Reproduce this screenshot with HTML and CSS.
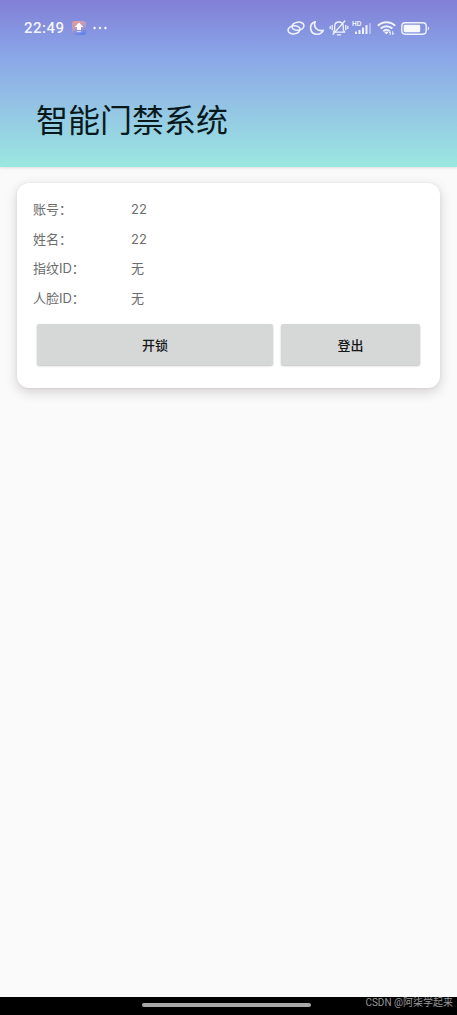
FILE: index.html
```html
<!DOCTYPE html>
<html lang="zh-CN">
<head>
    <meta charset="UTF-8">
    <meta name="viewport" content="width=device-width, initial-scale=1.0">
    <title>智能门禁系统</title>
    <link rel="stylesheet" href="styles.css">
</head>
<body>
    <header class="header">
        <div class="status-bar">
            <span class="time">22:49</span>
            <svg class="app-icon" width="14" height="14" viewBox="0 0 14 14">
                <defs>
                    <linearGradient id="appBg" x1="0.2" y1="0" x2="0.6" y2="1">
                        <stop offset="0" stop-color="#e99a94"/>
                        <stop offset="0.5" stop-color="#b59bc9"/>
                        <stop offset="1" stop-color="#5d83ed"/>
                    </linearGradient>
                </defs>
                <rect width="14" height="14" rx="3" fill="url(#appBg)"/>
                <path d="M7 1.5L11.3 6H9v3H5V6H2.7z" fill="#fff"/>
                <path d="M5 10.6h4" stroke="#b9dcff" stroke-width="1.2"/>
            </svg>
            <svg class="more" width="14" height="4" viewBox="0 0 14 4" fill="#f3f4ff">
                <circle cx="1.6" cy="2" r="1.2"/>
                <circle cx="7" cy="2" r="1.2"/>
                <circle cx="12.4" cy="2" r="1.2"/>
            </svg>

            <div class="status-icons">
                <!-- 连接 -->
                <svg width="18" height="16" viewBox="0 0 18 16" fill="none" stroke="#f0f3ff" stroke-width="1.5">
                    <ellipse cx="11" cy="6.2" rx="6" ry="4.1" transform="rotate(-8 11 6.2)"/>
                    <ellipse cx="7" cy="9.8" rx="6" ry="4.1" transform="rotate(-8 7 9.8)"/>
                </svg>
                <!-- 勿扰 -->
                <svg class="moon" width="16" height="16" viewBox="0 0 16 16" fill="none" stroke="#f0f3ff" stroke-width="1.6" stroke-linejoin="round">
                    <path d="M6.2 1.8C2.8 3 1.2 6 1.7 9C2.3 12.3 5 14.3 8.3 14.2C11 14.1 13.2 12.7 14.3 10.2C11.5 11.1 8.8 10.5 7.1 8.5C5.4 6.5 5.2 4 6.2 1.8z"/>
                </svg>
                <!-- 静音 -->
                <svg class="bell" width="20" height="18" viewBox="0 0 20 18" fill="none" stroke="#f0f3ff" stroke-width="1.3" stroke-linecap="round">
                    <path d="M4.3 13.2H15.7L14.3 11V7.4C14.3 4.8 12.5 3 10 3C7.5 3 5.7 4.8 5.7 7.4V11z" stroke-linejoin="round"/>
                    <path d="M8.3 15.8h3.4M3.2 6.3v4.4M16.8 6.3v4.4M1.2 7.5v2M18.8 7.5v2"/>
                    <path d="M15.8 2L4 15.4"/>
                </svg>
                <!-- 信号 -->
                <svg class="signal" width="20" height="18" viewBox="0 0 20 18" fill="#f0f3ff">
                    <text class="hd" x="0" y="7">HD</text>
                    <rect x="3" y="12.5" width="2" height="2.5" rx="0.5"/>
                    <rect x="6.5" y="11" width="2" height="4" rx="0.5"/>
                    <rect x="10" y="8.5" width="2" height="6.5" rx="0.5"/>
                    <rect x="13.5" y="6" width="2" height="9" rx="0.5"/>
                    <rect x="17" y="4" width="2" height="11" rx="0.5" opacity="0.4"/>
                </svg>
                <!-- WiFi -->
                <svg class="wifi" width="19" height="16" viewBox="0 0 19 16" fill="none" stroke="#f0f3ff" stroke-width="2.1">
                    <path d="M0.9 5.7C5.6 1 13.4 1 18.1 5.7"/>
                    <path d="M3.7 8.6C7 5.4 12 5.4 15.3 8.6"/>
                    <path d="M6.3 11.2C8.2 9.5 10.8 9.5 12.7 11.2"/>
                    <path d="M7.3 12.2C8.6 11.1 10.4 11.1 11.4 12.2L9.4 14.5z" fill="#f0f3ff" stroke="none"/>
                    <path d="M13.2 15v-3.3l-1.1 1.3M15.7 11.2v3.3l1.1-1.3" stroke-width="1"/>
                </svg>
                <!-- 电量 -->
                <svg class="battery" width="29" height="13" viewBox="0 0 29 13">
                    <rect x="0.8" y="0.8" width="24.4" height="11.4" rx="3.4" fill="none" stroke="#f0f3ff" stroke-width="1.4"/>
                    <rect x="2.7" y="2.7" width="16.5" height="7.6" rx="1.4" fill="#f7f8ff"/>
                    <path d="M26.8 4.6C28.4 5 28.4 8 26.8 8.4z" fill="#f0f3ff"/>
                </svg>
            </div>
        </div>
        <h1 class="title">智能门禁系统</h1>
    </header>

    <main class="content">
        <section class="card">
            <dl class="info">
                <dt>账号：</dt>
                <dd>22</dd>
                <dt>姓名：</dt>
                <dd>22</dd>
                <dt>指纹ID：</dt>
                <dd>无</dd>
                <dt>人脸ID：</dt>
                <dd>无</dd>
            </dl>
            <div class="buttons">
                <button type="button" class="unlock">开锁</button>
                <button type="button" class="logout">登出</button>
            </div>
        </section>
    </main>

    <footer class="nav-bar">
        <div class="handle"></div>
        <span class="watermark">CSDN @阿柒学起来</span>
    </footer>
</body>
</html>
```
FILE: styles.css
```css
* {
    box-sizing: border-box;
}
body {
    margin: 0;
    height: 1015px;
    display: flex;
    flex-direction: column;
    background-color: #fafafa;
    font-family: Roboto, "Noto Sans CJK SC", sans-serif;
    overflow: hidden;
}

/* 顶部 */
.header {
    height: 167px;
    background: linear-gradient(#827fd6 0, #8698e2 36px, #8ba9e8 60px, #93c0e5 100px, #9ae5e1 162px, #9ae7e0 100%);
    box-shadow: 0 1px 3px rgba(0, 0, 0, 0.12);
}
.status-bar {
    display: flex;
    align-items: center;
    height: 56px;
    padding: 0 27px 0 24px;
}
.time {
    width: 48px;
    font-size: 15px;
    font-weight: 500;
    letter-spacing: 0.5px;
    color: #f3f4ff;
}
.more {
    margin-left: 7px;
}
.status-icons {
    display: flex;
    align-items: center;
    margin-left: auto;
}
.moon {
    margin-left: 4px;
}
.bell {
    margin-left: 4px;
}
.signal {
    margin-left: 3px;
}
.hd {
    font-family: "Liberation Sans", sans-serif;
    font-size: 6.5px;
    font-weight: 700;
}
.wifi {
    margin-left: 5px;
}
.battery {
    margin-left: 5px;
}
.title {
    margin: 41px 0 0 36px;
    font-size: 32px;
    line-height: 48px;
    font-weight: 400;
    color: #07191c;
}

/* 用户信息 */
.content {
    flex: 1;
    padding: 16px 17px;
}
.card {
    height: 205px;
    padding: 12px 20px 0 16px;
    border-radius: 12px;
    background-color: #fff;
    box-shadow: 0 4px 12px rgba(60, 40, 50, 0.2), 0 0 3px rgba(60, 40, 50, 0.08);
}
.info {
    display: grid;
    grid-template-columns: 98px 1fr;
    grid-auto-rows: 29.7px;
    margin: 0;
    font-family: Inter, "Noto Sans CJK SC", sans-serif;
    font-size: 13px;
    line-height: 29px;
    color: #6c6c6c;
}
.info dd {
    margin: 0;
}
.buttons {
    display: flex;
    gap: 8px;
    margin: 10px 0 0 4px;
}
.buttons button {
    height: 41px;
    padding: 0;
    border: none;
    border-radius: 2px;
    background-color: #d6d8d7;
    box-shadow: 0 1px 2px rgba(0, 0, 0, 0.25);
    font-family: inherit;
    font-size: 13px;
    font-weight: 500;
    color: #151717;
}
.buttons .unlock {
    width: 236px;
}
.buttons .logout {
    flex: 1;
}

/* 底部导航条 */
.nav-bar {
    position: relative;
    display: flex;
    justify-content: center;
    height: 18px;
    background-color: #000;
}
.handle {
    width: 169px;
    height: 4px;
    margin: 6px 4px 0 0;
    border-radius: 2px;
    background-color: #a9a9a9;
}
.watermark {
    position: absolute;
    right: 4px;
    top: -1px;
    font-size: 10px;
    line-height: 14px;
    color: #999;
}
```
